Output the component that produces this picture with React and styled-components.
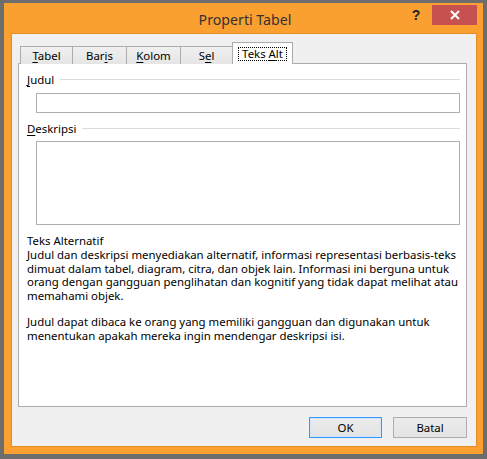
import React from "react";
import styled, { createGlobalStyle } from "styled-components";

const Global = createGlobalStyle`
  html, body { margin: 0; padding: 0; background: #6d6d6d; }
  * { box-sizing: border-box; }
  body { font-family: "Noto Sans", "Open Sans", sans-serif; }
`;

const Window = styled.div`
  width: 487px;
  height: 459px;
  border-style: solid;
  border-color: #6d6d6d;
  border-width: 3px 4px 5px 4px;
  background: #f9a031;
  display: flex;
  flex-direction: column;
`;

const TitleBar = styled.div`
  height: 30px;
  display: grid;
  grid-template-columns: 1fr auto 1fr;
  align-items: start;
  padding: 0 6px 0 7px;
`;

const Title = styled.div`
  grid-column: 2;
  font-size: 14.2px;
  color: #333;
  line-height: 20px;
  margin-top: 7px;
  margin-left: 2px;
`;

const Controls = styled.div`
  grid-column: 3;
  justify-self: end;
  display: flex;
  align-items: flex-start;
  margin-top: 2px;
`;

const HelpButton = styled.div`
  width: 22px;
  height: 20px;
  font-weight: bold;
  font-size: 14px;
  color: #222;
  display: flex;
  align-items: center;
  justify-content: center;
  margin-right: 5px;
  font-family: "Liberation Sans", sans-serif;
`;

const CloseButton = styled.div`
  width: 45px;
  height: 20px;
  background: #c75050;
  display: flex;
  align-items: center;
  justify-content: center;
`;

const Client = styled.div`
  flex: 1;
  margin: 0 6px 7px 7px;
  border: 1px solid #e28b27;
  background: #f0f0f0;
  padding: 8px 9px 8px 6px;
  display: flex;
  flex-direction: column;
  font-size: 11.4px;
  color: #000;
`;

const TabRow = styled.div`
  display: flex;
  align-items: flex-end;
  height: 22px;
  margin-left: 2px;
  margin-bottom: -1px;
  position: relative;
  z-index: 1;
`;

const Tab = styled.div`
  width: ${(p) => p.$w}px;
  height: ${(p) => (p.$active ? 22 : 18)}px;
  border: 1px solid #acacac;
  border-bottom: none;
  margin-left: ${(p) => (p.$first ? 0 : -1)}px;
  background: ${(p) =>
    p.$active ? "#ffffff" : "linear-gradient(#f0f0f0, #e5e5e5)"};
  display: flex;
  align-items: center;
  justify-content: center;
  padding-top: ${(p) => (p.$active ? 0 : 1)}px;
  line-height: 14px;
`;

const Focus = styled.span`
  border: 1px dotted #000;
  padding: 0 3px;
  line-height: 12px;
`;

const U = styled.span`
  text-decoration: underline;
  text-underline-offset: 2px;
`;

const Panel = styled.div`
  height: 344px;
  background: #fff;
  border: 1px solid #adadad;
  padding: 8px 6px 0 8px;
  display: flex;
  flex-direction: column;
`;

const GroupLabel = styled.div`
  display: flex;
  align-items: center;
  height: 15px;
  gap: 6px;
  margin-top: ${(p) => p.$mt || 0}px;
  &::after {
    content: "";
    flex: 1;
    height: 1px;
    background: #dcdcdc;
  }
`;

const Field = styled.div`
  margin: ${(p) => p.$mt}px 0 0 9px;
  width: 424px;
  height: ${(p) => p.$h}px;
  border: 1px solid #abadb3;
  background: #fff;
`;

const SectionTitle = styled.div`
  margin-top: 8px;
  line-height: 15px;
`;

const Para = styled.p`
  margin: 0;
  line-height: 13.5px;
  white-space: nowrap;
`;

const Gap = styled.div`
  height: 13px;
`;

const Footer = styled.div`
  display: flex;
  justify-content: flex-end;
  gap: 11px;
  margin-top: 10px;
`;

const Button = styled.div`
  width: ${(p) => p.$w}px;
  height: 21px;
  border: 1px solid ${(p) => (p.$default ? "#3399ff" : "#adadad")};
  background: linear-gradient(#ececec, #e3e3e3);
  display: flex;
  align-items: center;
  justify-content: center;
  box-shadow: ${(p) => (p.$default ? "inset 0 0 0 1px #cfe6fd" : "none")};
`;

const tabs = [
  { pre: "", u: "T", post: "abel", w: 53 },
  { pre: "Bar", u: "i", post: "s", w: 55 },
  { pre: "", u: "K", post: "olom", w: 55 },
  { pre: "S", u: "e", post: "l", w: 53 },
];

export default function App() {
  return (
    <>
      <Global />
      <Window>
        <TitleBar>
          <Title>Properti Tabel</Title>
          <Controls>
            <HelpButton>?</HelpButton>
            <CloseButton>
              <svg width="10" height="10" viewBox="0 0 10 10">
                <path d="M1 1 L9 9 M9 1 L1 9" stroke="#fff" strokeWidth="2" />
              </svg>
            </CloseButton>
          </Controls>
        </TitleBar>
        <Client>
          <TabRow>
            {tabs.map((t, i) => (
              <Tab key={i} $w={t.w} $first={i === 0}>
                <span>
                  {t.pre}
                  <U>{t.u}</U>
                  {t.post}
                </span>
              </Tab>
            ))}
            <Tab $w={61} $active>
              <Focus>
                Teks <U>A</U>lt
              </Focus>
            </Tab>
          </TabRow>
          <Panel>
            <GroupLabel>
              <span>
                <U>J</U>udul
              </span>
            </GroupLabel>
            <Field $mt={6} $h={20} />
            <GroupLabel $mt={8}>
              <span>
                <U>D</U>eskripsi
              </span>
            </GroupLabel>
            <Field $mt={5} $h={84} />
            <SectionTitle>Teks Alternatif</SectionTitle>
            <Para>
              Judul dan deskripsi menyediakan alternatif, informasi representasi berbasis-teks
              <br />
              dimuat dalam tabel, diagram, citra, dan objek lain. Informasi ini berguna untuk
              <br />
              orang dengan gangguan penglihatan dan kognitif yang tidak dapat melihat atau
              <br />
              memahami objek.
            </Para>
            <Gap />
            <Para>
              Judul dapat dibaca ke orang yang memiliki gangguan dan digunakan untuk
              <br />
              menentukan apakah mereka ingin mendengar deskripsi isi.
            </Para>
          </Panel>
          <Footer>
            <Button $w={73} $default>OK</Button>
            <Button $w={74}>Batal</Button>
          </Footer>
        </Client>
      </Window>
    </>
  );
}
